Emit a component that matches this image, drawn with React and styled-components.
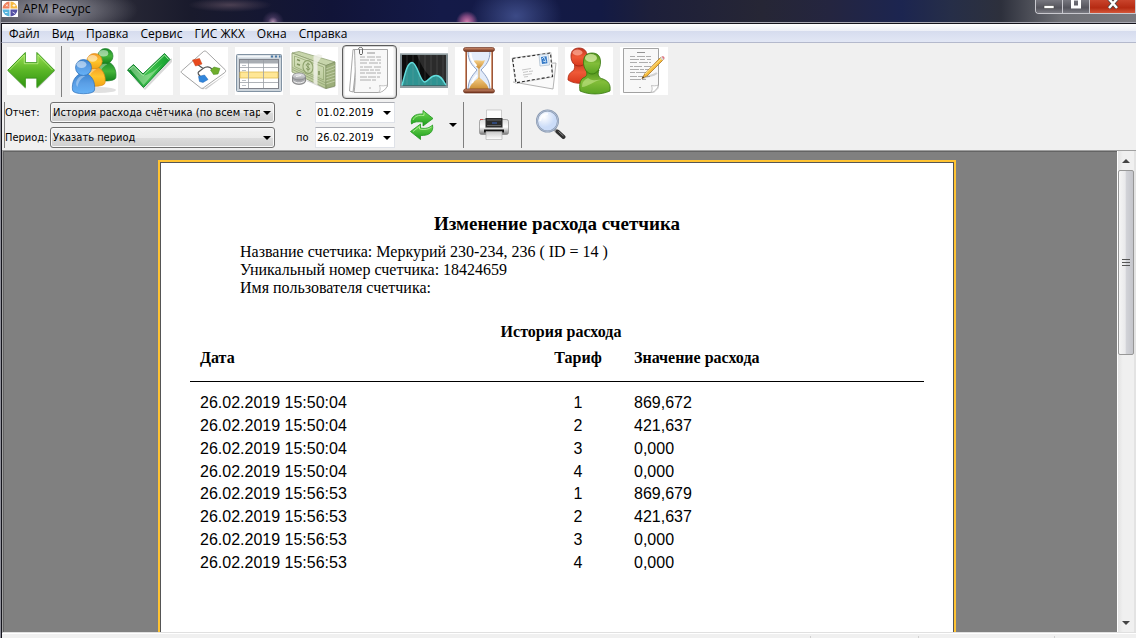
import React from 'react';
import styled, {createGlobalStyle} from 'styled-components';

const uiFont = '\'DejaVu Sans Condensed\', \'Noto Sans\', sans-serif';
const menuFont = '\'Open Sans\', \'Noto Sans\', sans-serif';

const GlobalStyle = createGlobalStyle`
    * {
        box-sizing: border-box;
    }

    body {
        margin: 0;
        background: #f0f0f0;
        color: #000;
        font-family: ${uiFont};
        font-size: 11px;
    }

    button, input, select {
        font: inherit;
        color: inherit;
    }
`;

const Window = styled.div`
    display: flex;
    flex-direction: column;
    height: 100vh;
    overflow: hidden;
    border-left: 1px solid #8f909a;
`;

const TitleBar = styled.header`
    display: flex;
    align-items: flex-start;
    justify-content: space-between;
    height: 24px;
    flex: none;
    border-bottom: 1px solid #14141c;
    box-shadow: inset 0 -1px 0 #a9a9b3;
    background:
        radial-gradient(ellipse 85px 26px at 52px 10px, rgba(165, 165, 175, 0.9), rgba(140, 140, 150, 0.6) 45%, transparent),
        radial-gradient(ellipse 42px 7px at 229px 5px, rgba(110, 90, 105, 0.6), transparent),
        radial-gradient(circle at 272px 22px, #b08cb0 0, rgba(120, 90, 140, 0.4) 5px, transparent 11px),
        radial-gradient(circle at 466px 22px, #d27fae 0, rgba(170, 90, 150, 0.7) 6px, transparent 11px),
        radial-gradient(ellipse 46px 34px at 515px 16px, #3c4a86, transparent),
        linear-gradient(90deg, #45454f 0, #2c2c38 100px, #191a2c 190px, #111438 330px, #141a48 440px, #131a44 600px, #1d1f3a 650px, #262635 760px, #242540 830px, #1c2550 900px, #262e48 950px, #2d303c 1000px, #6d6e74 1060px, #7a7a80 100%);
`;

const Caption = styled.h1`
    display: flex;
    align-items: center;
    gap: 5px;
    margin: 0;
    padding: 1px 0 0 1px;
    font-family: ${menuFont};
    font-size: 12px;
    font-weight: 400;
    line-height: 16px;
`;

const WindowControls = styled.div`
    display: flex;
    height: 14px;
    border: 1px solid #c9c9cf;
    border-top: 0;
    border-right: 0;
    border-radius: 0 0 0 4px;
    overflow: hidden;
`;

const WindowButton = styled.button`
    display: flex;
    align-items: flex-end;
    justify-content: center;
    width: ${(props) => (props.$close ? 46 : 27)}px;
    padding: 0 0 4px;
    border: 0;
    border-right: 1px solid #c9c9cf;
    background: ${(props) => (props.$close ? 'linear-gradient(#c9442c, #b52a12 60%, #d4573a)' : 'linear-gradient(#77777f, #54545c 60%, #7c7c84)')};
`;

const MenuBar = styled.nav`
    display: flex;
    flex: none;
    height: 19px;
    padding-left: 1px;
    border-left: 1px solid #14141c;
    border-bottom: 1px solid #b4b9cc;
    background: linear-gradient(#fff 0, #eceff7 7px, #d6dcee 7px, #e2e7f5 100%);
`;

const MenuItem = styled.button`
    padding: 0 6px;
    border: 0;
    background: none;
    font-family: ${menuFont};
    font-size: 12px;
    line-height: 20px;
`;

const Client = styled.div`
    display: flex;
    flex: 1;
    flex-direction: column;
    min-height: 0;
    border-left: 1px solid #14141c;
`;

const Toolbar = styled.div`
    display: flex;
    flex: none;
    padding: 2px 2px 0;
`;

const ToolButton = styled.button`
    display: flex;
    width: 55px;
    height: 54px;
    padding: ${(props) => (props.$active ? '1px 2px' : '2px 3px')};
    border: ${(props) => (props.$active ? '1px solid #5c5c5c' : '0')};
    border-radius: 4px;
    background: ${(props) => (props.$active ? '#f6f6f6' : 'none')};
    box-shadow: ${(props) => (props.$active ? 'inset 0 0 2px #777' : 'none')};

    svg {
        background: #fff;
    }
`;

const Separator = styled.div`
    flex: none;
    width: 1px;
    background: #7f7f7f;
    margin: ${(props) => props.$margin || '0'};
`;

const ReportBar = styled.form`
    display: flex;
    flex: none;
    align-items: stretch;
    padding: 3px 0 2px 2px;
`;

const Fields = styled.div`
    display: grid;
    grid-template-columns: ${(props) => props.$columns};
    grid-auto-rows: 21px;
    row-gap: 4px;
    align-items: center;
    margin-left: ${(props) => props.$indent || 0}px;
`;

const FieldLabel = styled.label`
    white-space: nowrap;
`;

const Arrow = styled.span`
    width: 0;
    border: 4px solid transparent;
    border-top-color: #000;
    border-bottom: 0;
`;

const SelectBox = styled.div`
    position: relative;

    ${Arrow} {
        position: absolute;
        top: 9px;
        right: 4px;
        pointer-events: none;
    }
`;

const Select = styled.select`
    display: block;
    appearance: none;
    width: 100%;
    height: 21px;
    padding: 0 14px 0 2px;
    overflow: hidden;
    border: 1px solid #707070;
    border-radius: 3px;
    background: linear-gradient(#f2f2f2, #ebebeb 50%, #dcdcdc 51%, #cfcfcf);
    box-shadow: inset 0 0 0 1px #f8f8f8;
    text-overflow: clip;
`;

const DateBox = styled.div`
    display: flex;
    height: 21px;
    border: 1px solid #dfe2e8;
    border-top-color: #abadb3;
    background: #fff;
`;

const DateInput = styled.input`
    flex: 1;
    min-width: 0;
    padding: 0 0 0 1px;
    border: 0;
    background: none;
`;

const ArrowButton = styled.button`
    display: flex;
    align-items: center;
    justify-content: center;
    width: 14px;
    padding: 0;
    border: 0;
    background: none;
`;

const IconButton = styled.button`
    display: flex;
    align-items: center;
    justify-content: center;
    padding: 0;
    border: 0;
    background: none;
    margin: 0 ${(props) => props.$right || 0}px 0 ${(props) => props.$left || 0}px;
`;

const Viewer = styled.main`
    display: flex;
    flex: 1;
    min-height: 0;
    border-top: 1px solid #a0a0a0;
    border-left: 1px solid #a0a0a0;
    border-bottom: 1px solid #e0e0e0;
`;

const Canvas = styled.div`
    flex: 1;
    min-width: 0;
    padding: 8px 7px 0 0;
    overflow: hidden;
    border-top: 1px solid #646464;
    border-left: 1px solid #646464;
    background: #808080;
`;

const Sheet = styled.article`
    max-width: 798px;
    min-height: 1100px;
    margin: 0 auto;
    padding: 49px 30px 0;
    border: 2px solid #ffc332;
    box-shadow: inset 0 0 0 1px #555;
    background: #fff;
    font-family: 'Liberation Serif', serif;
    font-size: 16px;
`;

const SheetTitle = styled.h2`
    margin: 0;
    font-size: 19px;
    line-height: 26px;
    text-align: center;
`;

const MeterInfo = styled.div`
    margin: 6px 0 24px 50px;
    line-height: 18px;
`;

const Table = styled.table`
    width: 100%;
    height: 231px;
    border-collapse: collapse;
    table-layout: fixed;

    caption {
        padding-left: 8px;
        font-weight: bold;
        line-height: 22px;
    }

    th, td {
        padding: 0 10px;
        text-align: left;
    }

    th {
        height: 38px;
        padding-bottom: 7px;
        border-bottom: 1px solid #000;
        white-space: nowrap;
    }

    td {
        font-family: 'Liberation Sans', sans-serif;
        line-height: 22px;
    }

    tbody::before {
        content: '';
        display: table-row;
        height: 11px;
    }

    th:nth-child(2), td:nth-child(2) {
        width: 92px;
        text-align: center;
    }

    th:nth-child(3), td:nth-child(3) {
        width: 300px;
    }
`;

const ScrollBar = styled.div`
    display: flex;
    flex-direction: column;
    width: 19px;
    border-left: 1px solid #fff;
    border-right: 2px solid #e3e3e3;
    background: linear-gradient(90deg, #e3e3e3, #f0f0f0 30%, #f0f0f0);
`;

const ScrollThumb = styled.div`
    display: flex;
    align-items: center;
    justify-content: center;
    height: 185px;
    border: 1px solid #979797;
    border-radius: 2px;
    background: linear-gradient(90deg, #f5f5f5, #e9e9eb 45%, #d2d3d8 50%, #c4c5cb);
`;

const ScrollArrow = styled.button`
    display: flex;
    align-items: center;
    justify-content: center;
    height: 19px;
    margin-top: ${(props) => (props.$end ? 'auto' : '0')};
    padding: 0;
    border: 0;
    background: none;
`;

const StatusBar = styled.footer`
    display: grid;
    flex: none;
    grid-template-columns: 1fr 108px 136px 81px;
    height: 5px;
    padding-top: 2px;
    border-top: 1px solid #fff;
`;

const StatusCell = styled.div`
    border-right: 1px solid #d0d0d0;

    &:last-child {
        border: 0;
    }
`;

function Icon({children, width = 48, height = 48}) {
    return (
        <svg width={width} height={height} viewBox={`0 0 ${width} ${height}`} fill='none' aria-hidden='true'>
            {children}
        </svg>
    );
}

function Gradient({id, from, to, middle, flat}) {
    return (
        <linearGradient id={id} x1='0' y1='0' x2={flat ? 1 : 0} y2={flat ? 0 : 1}>
            <stop offset='0' stopColor={from}/>
            {middle && <stop offset='.5' stopColor={middle}/>}
            <stop offset='1' stopColor={to}/>
        </linearGradient>
    );
}

function LogoIcon() {
    return (
        <Icon width={16} height={16}>
            <path d='M0 0h16v16H0z' fill='#fff'/>
            <path d='M7.500 7.500V.500A7.300 7.300 0 0 0 .500 7.500z' fill='#f0805c'/>
            <path d='M8.500 7.500V.500a7.300 7.300 0 0 1 7 7z' fill='#f5b942'/>
            <path d='M7.500 8.500v7a7.300 7.300 0 0 1-7-7z' fill='#58b4dc'/>
            <path d='M8.500 8.500v7a7.300 7.300 0 0 0 7-7z' fill='#5450a4'/>
            <path d='M4 3.500l2 2M5.500 3.500L4 5.500M10.500 4.500h3M12 3v3M3 11.500h2.500M10.500 11l2.500 1.500' stroke='#fff' opacity='.8'/>
        </Icon>
    );
}

function ExchangeIcon() {
    return (
        <Icon>
            <defs><Gradient id='exchange' from='#9be052' middle='#5cb727' to='#2f9410'/></defs>
            <path d='M1 24.500L18.500 42v-10h12v10L48 24.500v-1L47 22z' fill='#bbb' opacity='.5'/>
            <path d='M.700 23.300L18.300 5.500v10.200h11.600V5.500l17.600 17.800-17.600 17.300V31H18.300v9.600z' fill='url(#exchange)' stroke='#3c9a1c'/>
            <path d='M2.500 23L17.300 8v8.700h13.600V8L45.500 23' stroke='#c6f391' opacity='.7'/>
        </Icon>
    );
}

function Pawn({x, y, scale, fill, edge}) {
    return (
        <g transform={`translate(${x} ${y}) scale(${scale})`}>
            <path d='M12 14C3 15 0 24 1 31c0 5 22 5 22 0 1-7-2-16-11-17z' fill={fill} stroke={edge} strokeWidth='.7'/>
            <circle cx='12' cy='8.500' r='8' fill={fill} stroke={edge} strokeWidth='.7'/>
            <ellipse cx='10' cy='5.500' rx='5' ry='3.500' fill='#fff' opacity='.5'/>
            <path d='M5 22c2-5 5-6 9-5-4 2-7 5-8 11-1-1-2-3-1-6z' fill='#fff' opacity='.35'/>
        </g>
    );
}

function UsersIcon() {
    return (
        <Icon>
            <defs>
                <Gradient id='pawnGreen' from='#188a28' middle='#45b53a' to='#168319'/>
                <Gradient id='pawnGold' from='#f39a25' middle='#ffc52e' to='#f2a414'/>
                <Gradient id='pawnBlue' from='#3b83ce' middle='#5b9fe6' to='#65b2f7'/>
            </defs>
            <ellipse cx='29' cy='43' rx='17' ry='3' fill='#999' opacity='.3'/>
            <Pawn x={24} y={1} scale={0.95} fill='url(#pawnGreen)' edge='#1c7c28'/>
            <Pawn x={13} y={6} scale={0.96} fill='url(#pawnGold)' edge='#d98918'/>
            <Pawn x={1.5} y={12} scale={1} fill='url(#pawnBlue)' edge='#2d6fb8'/>
        </Icon>
    );
}

function CheckIcon() {
    return (
        <Icon>
            <defs><Gradient id='check' from='#0c8a28' middle='#3fc24d' to='#12a02d' flat={true}/></defs>
            <path d='M3 26l17 17L47 15v-4L19 41z' fill='#aaa' opacity='.45'/>
            <path d='M2.500 23l6-5.500L18 27 39.500 6.500l5.500 6L18.500 40.500z' fill='url(#check)' stroke='#148431'/>
            <path d='M4 23l4.500-4L18 28.500 39.500 8l4 4.500' stroke='#b9f0b4' opacity='.85'/>
            <path d='M5 22l3.500-3 10 9.500c6-1 12-5 19-12L18.500 38z' fill='#dff8d4' opacity='.4'/>
        </Icon>
    );
}

function DiagramIcon() {
    return (
        <Icon>
            <path d='M2 26.500L23 42.500 46.500 27 26 42.500z' fill='#999' opacity='.5'/>
            <path d='M1.500 24L23.500 4.500c1-.7 2-.6 3 .3L45 22.600c1 1 .8 2-.3 3L23.500 40.800c-1 .7-2 .7-3 0L1.800 26c-.8-.6-.8-1.300-.3-2z' fill='#fff' stroke='#8f8f8f' strokeWidth='.8'/>
            <path d='M17 17l6 4.500M23 21.500L18.500 25c-1 1 0 3 2.500 5M23 21.500c3-2 5-2 7-1l4 3' stroke='#555' strokeWidth='1.200'/>
            <path d='M12.500 13l7-1.500 2.500 5.500-6.500 2z' fill='#e8491c' stroke='#c73c12' strokeWidth='.5'/>
            <path d='M30.500 23l3.500-3 6 1.500-2 5.500-4.500.5z' fill='#6fae2c' stroke='#3f861a' strokeWidth='.5'/>
            <path d='M18.500 29.500l6-1.500 3.500 4.500-5 3-3.500-1z' fill='#3186dc' stroke='#1d63b2' strokeWidth='.5'/>
        </Icon>
    );
}

function TableIcon() {
    return (
        <Icon>
            <rect x='1.500' y='7.500' width='45' height='37' rx='1' fill='#cdd5dc' stroke='#8293a3'/>
            <path d='M3 9.500h32' stroke='#f3f7fa' strokeWidth='2'/>
            <path d='M36 9.500h2M40 9.500h2M44 9.500h1.500' stroke='#4978a5' strokeWidth='2'/>
            <rect x='4.500' y='12.500' width='39' height='29' fill='#fff' stroke='#80838b'/>
            <path d='M5 13h38v3.500H5z' fill='#a8adb3'/>
            <path d='M5 25h38v6H5z' fill='#ffe796' stroke='#dfbd52' strokeWidth='.8'/>
            <path d='M5 20.500h38M5 35.500h38M13.500 13v28M28.500 13v28' stroke='#9aa0a6' strokeWidth='.8'/>
            <path d='M7 18.500h4M7 23.500h4M7 33.500h4M7 38.500h4' stroke='#bcc1c7'/>
        </Icon>
    );
}

function MoneyIcon() {
    return (
        <Icon>
            <defs>
                <Gradient id='notes' from='#dbe5c2' to='#b3c492'/>
                <Gradient id='coin' from='#f0f0f2' to='#9b9ca1'/>
            </defs>
            <path d='M14 33l21 9 11-2-6-3z' fill='#aaa' opacity='.5'/>
            <path d='M2 6l7-1.500L45 15l-9 3.500z' fill='#c7d5ab' stroke='#96a67b' strokeWidth='.8'/>
            <path d='M2 6l34 12.500v23L2 25z' fill='url(#notes)' stroke='#8a9b6d' strokeWidth='.8'/>
            <path d='M36 18.500L45 15v24l-9 2.500z' fill='#9cae7a' stroke='#7f9163' strokeWidth='.8'/>
            <path d='M36 22l9-3.500M36 25l9-3.500M36 28l9-3M36 31l9-3M36 34l9-3M36 37l9-3' stroke='#cdd9b4' strokeWidth='.7'/>
            <path d='M2.500 20.500L36 36M2.500 22.500L36 38.500' stroke='#8d9f6e' strokeWidth='.7'/>
            <path d='M4.500 9L33.500 20v13L4.500 19.500z' stroke='#94a874' strokeWidth='.8'/>
            <ellipse cx='18' cy='20' rx='5' ry='6.500' transform='rotate(-12 18 20)' fill='#cddab2' stroke='#8fa36e' strokeWidth='1.200'/>
            <path d='M20 17.500c-4-2-5 1-2 2.500s2 4-2 1.500M18 15.500v9' stroke='#758b53' strokeWidth='.8'/>
            <path d='M7 12.500l3 1.200M7 17l3 1.200M29 24v4' stroke='#7f945e' strokeWidth='1.500'/>
            <path d='M23.500 8.700l5-1.500 4 1.200-5 7.300v22.500l-4-2z' fill='#eef0e6' opacity='.85'/>
            <path d='M2.500 30v4c0 4.500 13 4.500 13 0v-4z' fill='#a9aaae' stroke='#777' strokeWidth='.8'/>
            <ellipse cx='9' cy='29.500' rx='6.500' ry='3.500' fill='url(#coin)' stroke='#85868a' strokeWidth='.8'/>
            <path d='M3.500 34c3 2.500 8 2.500 11 0M6 29.500l5-1' stroke='#f4f4f4'/>
        </Icon>
    );
}

function TextLines({x, y}) {
    return (
        <g transform={`translate(${x} ${y})`} stroke='#999' strokeWidth='.8'>
            <path d='M8 0h8' stroke='#777'/>
            <path d='M1 4h5m2 0h8m1 0h5M1 7h9m1 0h5m2 0h4M1 10h7m2 0h9m1 0h2M1 14h3m1 0h8m2 0h7M1 17h9m1 0h4m1 0h5M1 20h5m1 0h10m1 0h4M1 24h7m1 0h8m1 0h3M1 27h11m1 0h4'/>
            <path d='M10 35h2'/>
        </g>
    );
}

function DocumentIcon() {
    return (
        <Icon>
            <path d='M7 45L4 44 8 2h34v36l-8 8z' fill='#ddd'/>
            <path d='M4.500 44L8 2.500l5 1L8 45z' fill='#fff' stroke='#999' strokeWidth='.8'/>
            <path d='M9.500 2.500h33V39c-2 4-6 6-9 6.500H9c2-12 1-28 .5-43z' fill='#f8f8f8' stroke='#929292' strokeWidth='.8'/>
            <path d='M42.500 38c-3 1-5 1-8 .5 1 3 1 5-1 7 4 0 8-4 9-7.500z' fill='#fff' stroke='#aaa' strokeWidth='.7'/>
            <TextLines x={14} y={6}/>
            <path d='M14.500 2.500v4c0 1.500 3 1.500 3 0V2c0-2.500-4-2-4 0' stroke='#666'/>
        </Icon>
    );
}

function WaveIcon() {
    return (
        <Icon>
            <path d='M0 6.500h48v34.500H0z' fill='#7d8a8f'/>
            <path d='M2 8h44v30.500H2z' fill='#0c0c0c'/>
            <path d='M17 8h29v26c-12 1-20-4-29-26z' fill='#333' opacity='.8'/>
            <path d='M2 38.500C5 27 7 16 12 15.500S20 35 24.500 35c4 0 5-6.500 11.500-6.500 5 0 7 5 10 9.500v.500z' fill='#2e9392'/>
            <path d='M7 8v30M13 8v30M19 8v30M25 8v30M31 8v30M37 8v30M43 8v30' stroke='#aaa' strokeWidth='.7' opacity='.3'/>
            <path d='M2 38.500C5 27 7 16 12 15.500S20 35 24.500 35c4 0 5-6.500 11.500-6.500 5 0 7 5 10 9.500' stroke='#62dcdc' strokeWidth='1.500'/>
            <path d='M0 7h48M0 40h48' stroke='#a8b3b6'/>
        </Icon>
    );
}

function HourglassIcon() {
    return (
        <Icon>
            <defs>
                <Gradient id='wood' from='#d49271' to='#6b2d18'/>
                <Gradient id='sand' from='#f6d18a' to='#ca8a2f'/>
            </defs>
            <path d='M11 4v40M37 4v40' stroke='#9b563c' strokeWidth='2'/>
            <path d='M10.500 4v40M36.500 4v40' stroke='#eab58e' strokeWidth='.7'/>
            <path d='M13 4c0 10 4 14 9 19-5 6-9 10-9 21h22c0-11-4-15-9-21 5-5 9-9 9-19z' fill='#e3ecfa' stroke='#8ea2c6'/>
            <path d='M18 14c4-2 9 1 12-1-1 4-4 7-6 9-3-2-5-5-6-8z' fill='url(#sand)'/>
            <path d='M14 43c1-6 6-9 10-13 5 5 9 7 10 13z' fill='url(#sand)'/>
            <path d='M24 21v11' stroke='#d5a04c'/>
            <path d='M15.500 6c0 6 3 10 6 13M17 36c1-4 3-6 5-8' stroke='#fff' strokeWidth='2'/>
            <rect x='8.500' y='.500' width='31' height='4' rx='2' fill='url(#wood)' stroke='#6e341f' strokeWidth='.7'/>
            <rect x='8.500' y='42' width='31' height='4' rx='2' fill='url(#wood)' stroke='#6e341f' strokeWidth='.7'/>
        </Icon>
    );
}

function MailIcon() {
    return (
        <Icon>
            <path d='M10 17l36-1-3 26-40-7' fill='#fafafa' stroke='#a2a2a2' strokeWidth='.8'/>
            <path d='M2 11L41 5.500l2 24.500L5.500 36.500z' fill='#fafafa' stroke='#ccc' strokeWidth='.8'/>
            <path d='M2.500 11.500L40.500 6l2 23.500L6 35.800z' stroke='#2c2c2c' strokeWidth='1.100' strokeDasharray='3 2'/>
            <path d='M29 8l9-1 1.500 11-9.500 1z' fill='#e9f2fb' stroke='#a8bacb' strokeWidth='.7'/>
            <path d='M31 10l5.500-.7 1 7-5.500.7z' fill='#3579c6'/>
            <path d='M32 12l2-2 2 5-3-1' stroke='#c0dcf5'/>
            <path d='M12 23l9-1.500M13 25.500l5-1m1 0l4-.5M13 28l9-1.300M14 30l4-.5' stroke='#b0b0b0' strokeWidth='.7'/>
        </Icon>
    );
}

function PeopleIcon() {
    return (
        <Icon>
            <defs>
                <Gradient id='personRed' from='#c0301a' middle='#ef5a37' to='#d9381c'/>
                <Gradient id='personGreen' from='#4b8e18' middle='#82bd39' to='#5aa322'/>
            </defs>
            <path d='M9 15c1 4 1 7-1 9-4 2-5 5-5 9 6 4 14 4 20 2V20l-4-6z' fill='url(#personRed)' stroke='#b02b14' strokeWidth='.8'/>
            <path d='M6 9c0-5 3-8 8-8s8 3 8 8c0 6-3 10-8 10S6 15 6 9z' fill='url(#personRed)' stroke='#9e2211' strokeWidth='.8'/>
            <ellipse cx='12.500' cy='5.500' rx='5' ry='3' fill='#ffb39d' opacity='.7'/>
            <path d='M21 23c2 5 0 7-3 8-3 2-4 7-3 13 9 4 21 4 30 0 1-7-2-10-7-12-4-1-6-4-4-9z' fill='url(#personGreen)' stroke='#37770f' strokeWidth='.8'/>
            <path d='M18.500 15c0-6 3-9 8.500-9s8.500 3 8.500 9c0 7-4 12-8.500 12s-8.500-5-8.500-12z' fill='url(#personGreen)' stroke='#37770f' strokeWidth='.8'/>
            <ellipse cx='26' cy='11' rx='6' ry='4' fill='#e4f5b5' opacity='.7'/>
            <path d='M17 40c0-5 2-7 6-9 5 4 9 1 13 2-8 1-13 7-19 7z' fill='#d4ee9c' opacity='.5'/>
        </Icon>
    );
}

function EditIcon() {
    return (
        <Icon>
            <path d='M4 3h35v38l-5 5H5z' fill='#ddd'/>
            <path d='M3.500 1.500h35V38c-2 4-5 6-8 7.500h-27z' fill='#f8f8f8' stroke='#8e8e8e' strokeWidth='.8'/>
            <path d='M38.500 38c-3 1-5 1-7 .5 1 3 1 5-1 7 4 0 7-4 8-7.500z' fill='#fff' stroke='#aaa' strokeWidth='.7'/>
            <TextLines x={9} y={5.500}/>
            <path d='M22 32c5-4 10-2 15-6' stroke='#777' strokeWidth='2' opacity='.3'/>
            <path d='M22 31.500l3-5L41 10l2.500 2.500L27 29z' fill='#f6bd3e' stroke='#ab7524' strokeWidth='.8'/>
            <path d='M25 27L42 11' stroke='#ffe58f'/>
            <path d='M40 11l1.500-1.500 2.500 2.500-1.500 1.500z' fill='#d9d9d9'/>
            <path d='M41.500 9.500c2-1 4 1 2.500 3z' fill='#dd7680'/>
            <path d='M22 31.500l1-2 1 1z' fill='#222'/>
        </Icon>
    );
}

function RefreshIcon() {
    return (
        <Icon width={24} height={32}>
            <defs><Gradient id='refresh' from='#73db54' to='#1d9c1c'/></defs>
            <path d='M1.500 15C0 8 5 4.500 13 5V1.500l10 8-10 7.500v-4c-5-.5-9-.5-11.500 2z' fill='url(#refresh)' stroke='#1f971d' strokeWidth='.8'/>
            <path d='M22.500 16c1.500 7-3.500 11-12 10.500V30.500L.500 22.500 10.500 15v4c5 1 9 0 12-3z' fill='url(#refresh)' stroke='#1f971d' strokeWidth='.8'/>
            <path d='M3 11c2-4 5-5 11-4.500V3.500M3 22.500l6.500-5v2.500c5 1 9 .5 12-2' stroke='#b5f29c' opacity='.8'/>
        </Icon>
    );
}

function PrinterIcon() {
    return (
        <Icon width={32} height={32}>
            <defs>
                <Gradient id='printer' from='#c8c8c8' to='#fff'/>
                <Gradient id='printerSide' from='#ddd' middle='#fff' to='#777'/>
            </defs>
            <path d='M8.500 1h15v10h-15z' fill='#fdfdfd' stroke='#bbb' strokeWidth='.7'/>
            <rect x='1.500' y='10.500' width='29' height='15' rx='2' fill='url(#printerSide)' stroke='#888' strokeWidth='.7'/>
            <path d='M7.500 9h17v10h-17z' fill='#2c2c2c'/>
            <path d='M9 11h14M9 16.500h14' stroke='#666'/>
            <path d='M14 14h5' stroke='#3563c4'/>
            <path d='M7 18.500h18l-1 2H8z' fill='#ddd'/>
            <path d='M6 20.500h20v3H6z' fill='#111'/>
            <path d='M8 22.500h16v8H8z' fill='url(#printer)' stroke='#aaa' strokeWidth='.6'/>
            <path d='M2 10.500h3' stroke='#c55'/>
        </Icon>
    );
}

function SearchIcon() {
    return (
        <Icon width={32} height={32}>
            <defs>
                <radialGradient id='lens' cx='.35' cy='.3'>
                    <stop offset='0' stopColor='#fff'/>
                    <stop offset='1' stopColor='#cbdcf8'/>
                </radialGradient>
            </defs>
            <path d='M20 21l10 8' stroke='#999' strokeWidth='4' opacity='.4'/>
            <path d='M19.500 20l3 3' stroke='#999' strokeWidth='3'/>
            <path d='M22.500 22.500l6 5.500' stroke='#303030' strokeWidth='4' strokeLinecap='round'/>
            <path d='M23.500 22.500l5 4.500' stroke='#888'/>
            <circle cx='12.500' cy='12' r='10.500' fill='url(#lens)' stroke='#8495ae' strokeWidth='2'/>
            <circle cx='12.500' cy='12' r='10.500' stroke='#c1cde0' strokeWidth='.7'/>
            <path d='M5 12c1-5 4-7 8-7' stroke='#fff' strokeWidth='2' opacity='.8'/>
        </Icon>
    );
}

const menu = ['Файл', 'Вид', 'Правка', 'Сервис', 'ГИС ЖКХ', 'Окна', 'Справка'];

const tools = [
    {name: 'Абоненты', icon: UsersIcon},
    {name: 'Проверка', icon: CheckIcon},
    {name: 'Схема', icon: DiagramIcon},
    {name: 'Таблица', icon: TableIcon},
    {name: 'Оплата', icon: MoneyIcon},
    {name: 'Отчеты', icon: DocumentIcon, active: true},
    {name: 'График', icon: WaveIcon},
    {name: 'Ожидание', icon: HourglassIcon},
    {name: 'Почта', icon: MailIcon},
    {name: 'Пользователи', icon: PeopleIcon},
    {name: 'Журнал', icon: EditIcon},
];

const readings = [
    ['26.02.2019 15:50:04', '1', '869,672'],
    ['26.02.2019 15:50:04', '2', '421,637'],
    ['26.02.2019 15:50:04', '3', '0,000'],
    ['26.02.2019 15:50:04', '4', '0,000'],
    ['26.02.2019 15:56:53', '1', '869,679'],
    ['26.02.2019 15:56:53', '2', '421,637'],
    ['26.02.2019 15:56:53', '3', '0,000'],
    ['26.02.2019 15:56:53', '4', '0,000'],
];

function SelectField({id, label, value}) {
    return (
        <>
            <FieldLabel htmlFor={id}>{label}</FieldLabel>
            <SelectBox>
                <Select id={id}>
                    <option>{value}</option>
                </Select>
                <Arrow/>
            </SelectBox>
        </>
    );
}

function DateField({id, label, value}) {
    return (
        <>
            <FieldLabel htmlFor={id}>{label}</FieldLabel>
            <DateBox>
                <DateInput id={id} defaultValue={value}/>
                <ArrowButton type='button' aria-label='Календарь'><Arrow/></ArrowButton>
            </DateBox>
        </>
    );
}

function App() {
    return (
        <Window>
            <GlobalStyle/>
            <TitleBar>
                <Caption><LogoIcon/>{'АРМ Ресурс'}</Caption>
                <WindowControls>
                    <WindowButton aria-label='Свернуть'>
                        <Icon width={12} height={9}><path d='M1 5.500h10v3H1z' fill='#fff' stroke='#444' strokeWidth='.6'/></Icon>
                    </WindowButton>
                    <WindowButton aria-label='Развернуть'>
                        <Icon width={12} height={9}><path d='M2.500-1h7v8h-7z' stroke='#fff' strokeWidth='3'/></Icon>
                    </WindowButton>
                    <WindowButton $close={true} aria-label='Закрыть'>
                        <Icon width={12} height={9}>
                            <path d='M2 8l8-9M2-1l8 9' stroke='#444' strokeWidth='4'/>
                            <path d='M2 8l8-9M2-1l8 9' stroke='#fff' strokeWidth='2.500'/>
                        </Icon>
                    </WindowButton>
                </WindowControls>
            </TitleBar>
            <MenuBar>
                {menu.map((item) => <MenuItem key={item}>{item}</MenuItem>)}
            </MenuBar>
            <Client>
                <Toolbar>
                    <ToolButton aria-label='Обмен'><ExchangeIcon/></ToolButton>
                    <Separator $margin='1px 5px 2px 2px'/>
                    {tools.map(({name, icon: ToolIcon, active}) => (
                        <ToolButton key={name} aria-label={name} $active={active}><ToolIcon/></ToolButton>
                    ))}
                </Toolbar>
                <ReportBar>
                    <Separator/>
                    <Fields $columns='45px 225px'>
                        <SelectField id='report' label='Отчет:' value='История расхода счётчика (по всем тар'/>
                        <SelectField id='period' label='Период:' value='Указать период'/>
                    </Fields>
                    <Fields $columns='19px 80px' $indent={21}>
                        <DateField id='from' label='с' value='01.02.2019'/>
                        <DateField id='to' label='по' value='26.02.2019'/>
                    </Fields>
                    <IconButton type='button' $left={15} aria-label='Обновить'><RefreshIcon/></IconButton>
                    <IconButton type='button' $left={15} $right={6} aria-label='Параметры обновления'><Arrow/></IconButton>
                    <Separator/>
                    <IconButton type='button' $left={14} $right={11} aria-label='Печать'><PrinterIcon/></IconButton>
                    <Separator/>
                    <IconButton type='button' $left={13} aria-label='Поиск'><SearchIcon/></IconButton>
                </ReportBar>
                <Viewer>
                    <Canvas>
                        <Sheet>
                            <SheetTitle>{'Изменение расхода счетчика'}</SheetTitle>
                            <MeterInfo>
                                <div>{'Название счетчика: Меркурий 230-234, 236 ( ID = 14 )'}</div>
                                <div>{'Уникальный номер счетчика: 18424659'}</div>
                                <div>{'Имя пользователя счетчика:'}</div>
                            </MeterInfo>
                            <Table>
                                <caption>{'История расхода'}</caption>
                                <thead>
                                    <tr>
                                        <th>{'Дата'}</th>
                                        <th>{'Тариф'}</th>
                                        <th>{'Значение расхода'}</th>
                                    </tr>
                                </thead>
                                <tbody>
                                    {readings.map(([date, tariff, value]) => (
                                        <tr key={date + tariff}>
                                            <td>{date}</td>
                                            <td>{tariff}</td>
                                            <td>{value}</td>
                                        </tr>
                                    ))}
                                </tbody>
                            </Table>
                        </Sheet>
                    </Canvas>
                    <ScrollBar>
                        <ScrollArrow aria-label='Вверх'>
                            <Icon width={8} height={4}><path d='M4 0l4 4H0z' fill='#444'/></Icon>
                        </ScrollArrow>
                        <ScrollThumb>
                            <Icon width={8} height={8}><path d='M0 .500h8M0 3.500h8M0 6.500h8' stroke='#555'/></Icon>
                        </ScrollThumb>
                        <ScrollArrow $end={true} aria-label='Вниз'>
                            <Icon width={8} height={4}><path d='M0 0h8L4 4z' fill='#444'/></Icon>
                        </ScrollArrow>
                    </ScrollBar>
                </Viewer>
                <StatusBar>
                    <StatusCell/>
                    <StatusCell/>
                    <StatusCell/>
                    <StatusCell/>
                </StatusBar>
            </Client>
        </Window>
    );
}

export default App;
